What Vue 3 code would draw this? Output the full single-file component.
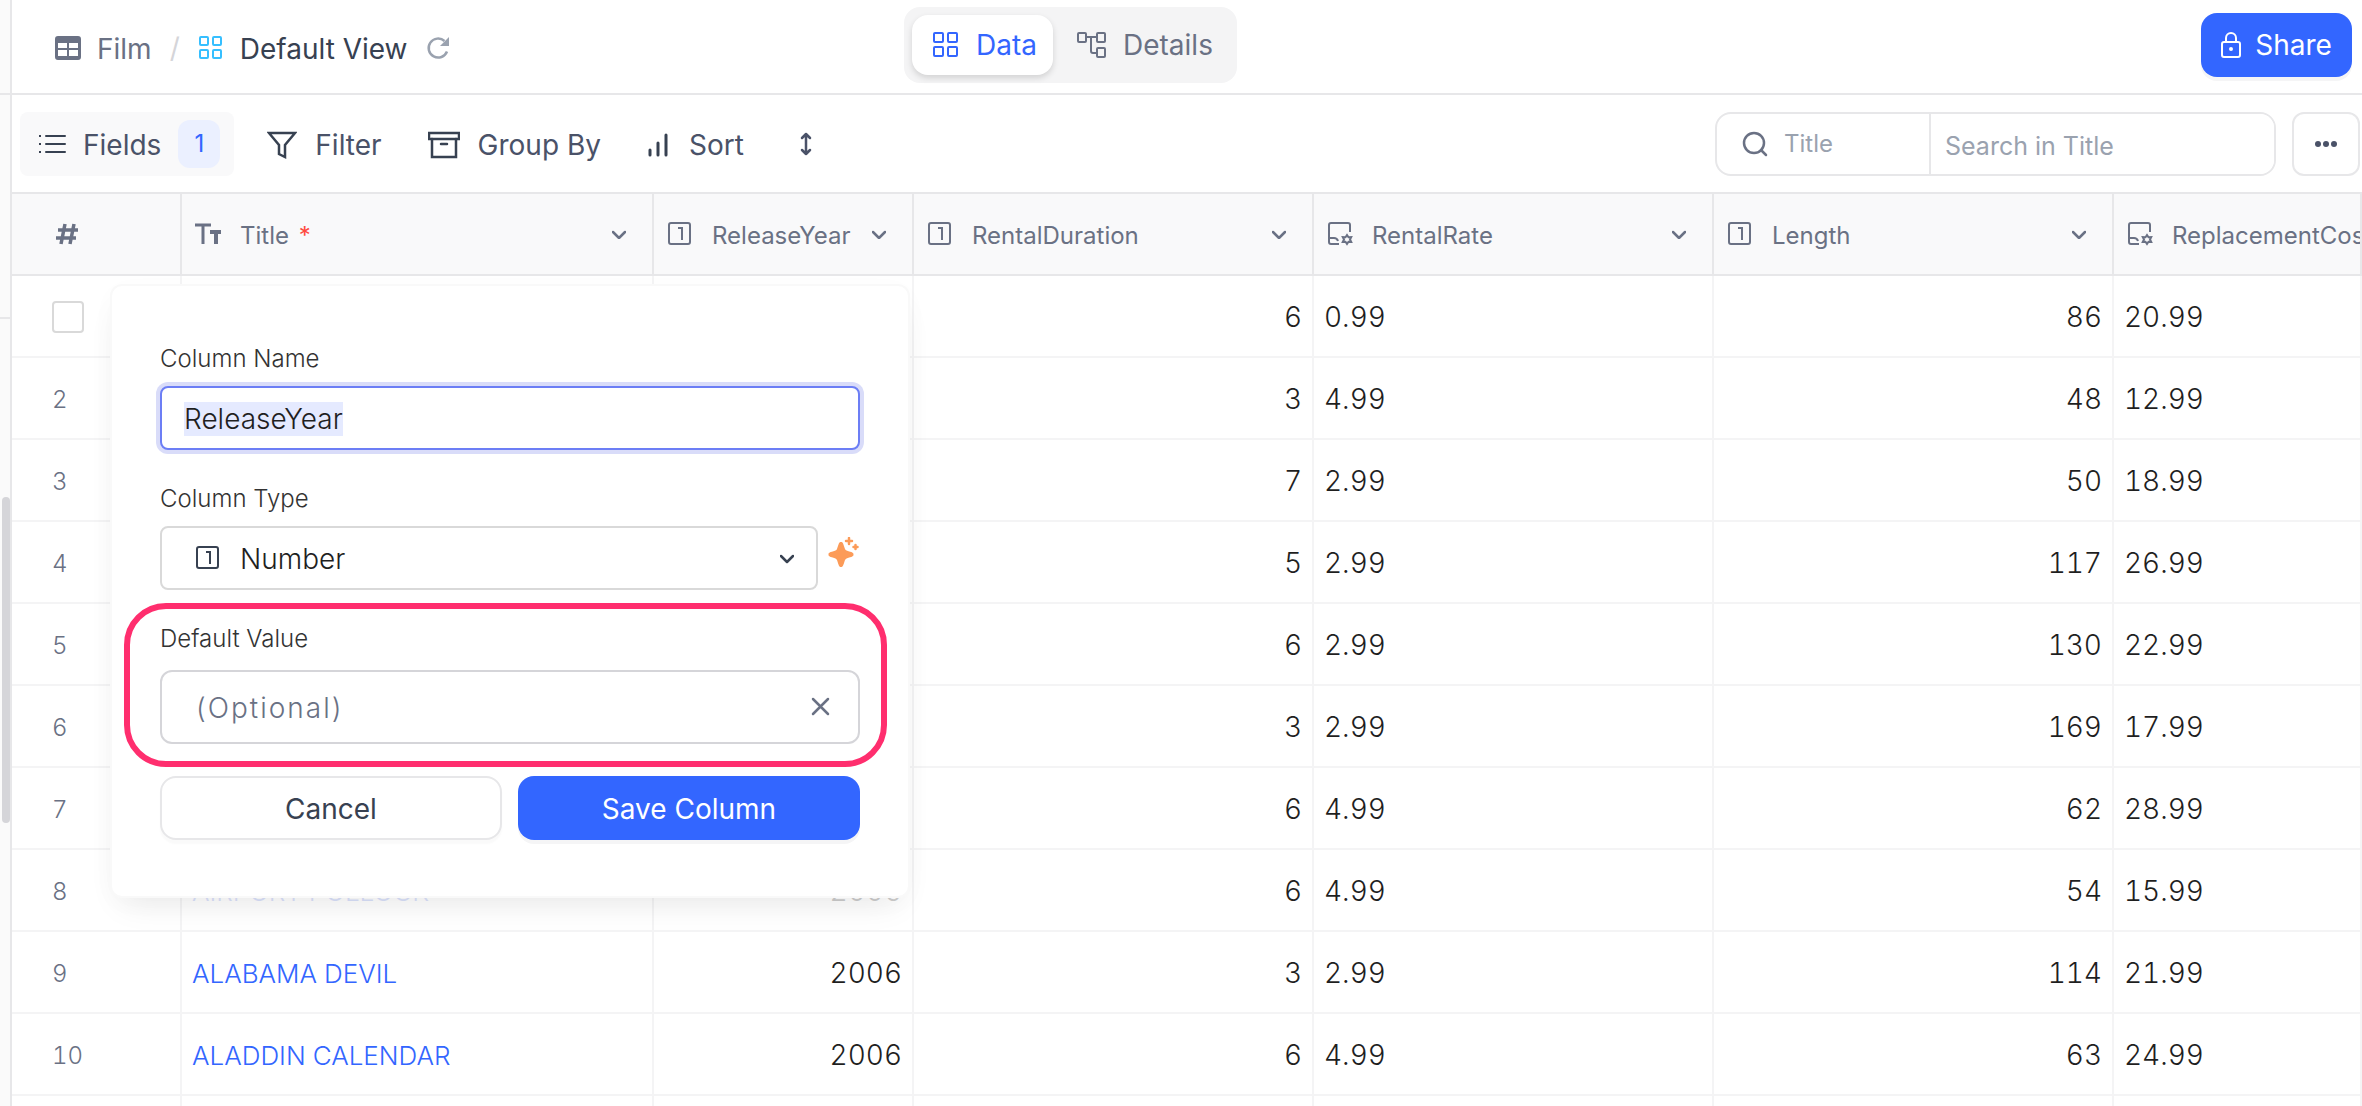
<script setup>
import { onMounted, ref } from 'vue'

const nameInput = ref(null)
const columnName = ref('ReleaseYear')

onMounted(() => {
  nameInput.value.focus()
  nameInput.value.select()
})

const columns = [
  { key: 'title', label: 'Title', icon: 'text', required: true },
  { key: 'year', label: 'ReleaseYear', icon: 'number' },
  { key: 'duration', label: 'RentalDuration', icon: 'number' },
  { key: 'rate', label: 'RentalRate', icon: 'decimal' },
  { key: 'length', label: 'Length', icon: 'number' },
  { key: 'cost', label: 'ReplacementCost', icon: 'decimal' },
]

const rows = [
  { id: 1, title: '', year: '', duration: 6, rate: '0.99', length: 86, cost: '20.99' },
  { id: 2, title: '', year: '', duration: 3, rate: '4.99', length: 48, cost: '12.99' },
  { id: 3, title: '', year: '', duration: 7, rate: '2.99', length: 50, cost: '18.99' },
  { id: 4, title: '', year: '', duration: 5, rate: '2.99', length: 117, cost: '26.99' },
  { id: 5, title: '', year: '', duration: 6, rate: '2.99', length: 130, cost: '22.99' },
  { id: 6, title: '', year: '', duration: 3, rate: '2.99', length: 169, cost: '17.99' },
  { id: 7, title: '', year: '', duration: 6, rate: '4.99', length: 62, cost: '28.99' },
  { id: 8, title: 'AIRPORT POLLOCK', year: 2006, duration: 6, rate: '4.99', length: 54, cost: '15.99', dimmed: true },
  { id: 9, title: 'ALABAMA DEVIL', year: 2006, duration: 3, rate: '2.99', length: 114, cost: '21.99' },
  { id: 10, title: 'ALADDIN CALENDAR', year: 2006, duration: 6, rate: '4.99', length: 63, cost: '24.99' },
]
</script>

<template>
  <div class="app">
    <aside class="rail">
      <div class="rail-head"></div>
      <div class="rail-mid"></div>
      <div class="rail-thumb"></div>
    </aside>

    <main class="main">
      <header class="topbar">
        <nav class="crumbs" aria-label="Breadcrumb">
          <svg class="film-icon" width="26" height="24" viewBox="0 0 26 24">
            <path fill="#6a7184" fill-rule="evenodd" d="M3 0h20a3 3 0 0 1 3 3v18a3 3 0 0 1-3 3H3a3 3 0 0 1-3-3V3a3 3 0 0 1 3-3zM3 7v5h9V7zM14 7v5h9V7zM3 14v6h9v-6zM14 14v6h9v-6z" />
          </svg>
          <a class="crumb" href="#">Film</a>
          <span class="slash">/</span>
          <svg class="view-icon" width="26" height="26" viewBox="0 0 26 26" fill="none" stroke="#36bfff" stroke-width="2">
            <rect x="2" y="2" width="8" height="8" rx="1" /><rect x="15" y="2" width="8" height="8" rx="1" />
            <rect x="2" y="15" width="8" height="8" rx="1" /><rect x="15" y="15" width="8" height="8" rx="1" />
          </svg>
          <a class="crumb current" href="#">Default View</a>
          <button class="plain reload" type="button" aria-label="Reload">
            <svg width="24" height="24" viewBox="0 0 24 24">
              <path fill="none" stroke="#9aa2af" stroke-width="2.500" d="M21 15.500A9.500 9.500 0 1 1 18.500 5" />
              <path fill="#9aa2af" d="M23 1v9h-9z" />
            </svg>
          </button>
        </nav>

        <div class="tabs">
          <button class="tab active" type="button">
            <svg width="28" height="26" viewBox="0 0 28 26" fill="none" stroke="currentColor" stroke-width="2">
              <rect x="2" y="1" width="9" height="9" rx="1" /><rect x="16" y="1" width="9" height="9" rx="1" />
              <rect x="2" y="15" width="9" height="9" rx="1" /><rect x="16" y="15" width="9" height="9" rx="1" />
            </svg>
            Data
          </button>
          <button class="tab" type="button">
            <svg width="30" height="28" viewBox="0 0 30 28" fill="none" stroke="currentColor" stroke-width="2">
              <rect x="1" y="2" width="8" height="9" rx="1" /><rect x="20" y="2" width="8" height="9" rx="1" />
              <rect x="20" y="17" width="8" height="9" rx="1" /><path d="M9 6h11M14 6v14a2 2 0 0 0 2 2h4" />
            </svg>
            Details
          </button>
        </div>

        <div class="top-actions">
          <button class="share" type="button">
            <svg width="20" height="26" viewBox="0 0 20 26" fill="none" stroke="currentColor" stroke-width="2">
              <rect x="1" y="10" width="18" height="15" rx="2" /><path d="M5 10V6a5 5 0 0 1 10 0v4" />
              <circle cx="10" cy="17" r="2" fill="currentColor" stroke="none" />
            </svg>
            Share
          </button>
        </div>
      </header>

      <div class="toolbar">
        <button class="tool fields" type="button">
          <svg width="28" height="20" viewBox="0 0 28 20" fill="none" stroke="#374151" stroke-width="2">
            <path d="M8 2h19M8 10h19M8 18h19" stroke-linecap="round" /><path d="M1 2h2M1 10h2M1 18h2" />
          </svg>
          <span class="fields-label">Fields</span>
          <span class="count">1</span>
        </button>
        <button class="tool filter" type="button">
          <svg width="30" height="28" viewBox="0 0 30 28" fill="none" stroke="#374151" stroke-width="2.500">
            <path d="M2 2h26L18 14v12l-6-3v-9z" />
          </svg>
          Filter
        </button>
        <button class="tool group" type="button">
          <svg width="32" height="28" viewBox="0 0 32 28" fill="none" stroke="#374151" stroke-width="2.500">
            <rect x="1" y="2" width="30" height="6" /><path d="M4 8v18h24V8M13 13h6" stroke-linecap="round" />
          </svg>
          Group By
        </button>
        <button class="tool sort" type="button">
          <svg width="22" height="26" viewBox="0 0 22 26" fill="none" stroke="#374151" stroke-width="3" stroke-linecap="round">
            <path d="M3 18v5M11 11v12M19 3v20" />
          </svg>
          Sort
        </button>
        <button class="plain row-height" type="button" aria-label="Row height">
          <svg width="12" height="24" viewBox="0 0 12 24" fill="none" stroke="#4a5268" stroke-width="2.500" stroke-linecap="round" stroke-linejoin="round">
            <path d="M6 2v20M2 6l4-4 4 4M2 18l4 4 4-4" />
          </svg>
        </button>

        <div class="search">
          <button class="plain search-field" type="button">
            <svg width="26" height="26" viewBox="0 0 26 26" fill="none" stroke="#6a7184" stroke-width="2.500" stroke-linecap="round">
              <circle cx="12" cy="12" r="10" /><path d="M19 19l5 5" />
            </svg>
            Title
          </button>
          <input class="search-input" type="text" placeholder="Search in Title" aria-label="Search in Title" />
        </div>
        <button class="more" type="button" aria-label="More actions">
          <svg width="24" height="8" viewBox="0 0 24 8" fill="#4a5268">
            <circle cx="4" cy="4" r="3" /><circle cx="12" cy="4" r="3" /><circle cx="20" cy="4" r="3" />
          </svg>
        </button>
      </div>

      <section class="grid">
        <table>
          <colgroup>
            <col class="w-index" /><col class="w-title" /><col class="w-year" />
            <col class="w-std" /><col class="w-std" /><col class="w-std" /><col />
          </colgroup>
          <thead>
            <tr>
              <th class="index">
                <svg width="24" height="22" viewBox="0 0 24 22" fill="none" stroke="#6a7184" stroke-width="3.500">
                  <path d="M10 1L6 21M19 1l-4 20M3 7h20M1 15h20" />
                </svg>
              </th>
              <th v-for="col in columns" :key="col.key">
                <div class="th">
                  <span class="th-icon">
                    <svg v-if="col.icon === 'text'" width="28" height="26" viewBox="0 0 28 26" fill="none" stroke="#6a7184">
                      <path d="M0 4h16M8 4v19" stroke-width="3" /><path d="M15 11h11M21 11v12" stroke-width="4" />
                    </svg>
                    <svg v-else-if="col.icon === 'number'" width="26" height="26" viewBox="0 0 26 26" fill="none" stroke="#6a7184" stroke-width="2">
                      <rect x="2" y="2" width="21" height="21" rx="2" /><path d="M11 7h4v12" />
                    </svg>
                    <svg v-else width="28" height="28" viewBox="0 0 28 28" fill="none" stroke="#6a7184" stroke-width="2">
                      <path d="M23 12V5a2 2 0 0 0-2-2H4a2 2 0 0 0-2 2v17a2 2 0 0 0 2 2h8M2 18h5q3 0 4 3" />
                      <path d="M20 15l1.500 2.200 2.700-.2-1.200 2.500 1.200 2.500-2.700-.2L20 24l-1.500-2.200-2.700.2 1.200-2.500-1.200-2.500 2.700.2z" />
                    </svg>
                  </span>
                  <span class="th-label">{{ col.label }}<span v-if="col.required" class="star">*</span></span>
                  <svg v-if="col.key !== 'cost'" class="chev" width="14" height="10" viewBox="0 0 14 10" fill="none" stroke="#6a7184" stroke-width="2.500" stroke-linecap="round" stroke-linejoin="round">
                    <path d="M1 3l6 6 6-6" />
                  </svg>
                </div>
              </th>
            </tr>
          </thead>
          <tbody>
            <tr v-for="row in rows" :key="row.id" :class="{ dimmed: row.dimmed }">
              <td class="index">
                <input v-if="row.id === 1" class="check" type="checkbox" aria-label="Select row 1" />
                <template v-else>{{ row.id }}</template>
              </td>
              <td class="title">{{ row.title }}</td>
              <td class="num year">{{ row.year }}</td>
              <td class="num">{{ row.duration }}</td>
              <td>{{ row.rate }}</td>
              <td class="num">{{ row.length }}</td>
              <td>{{ row.cost }}</td>
            </tr>
            <tr><td class="index"></td><td></td><td></td><td></td><td></td><td></td><td></td></tr>
          </tbody>
        </table>

        <form class="popover" @submit.prevent>
          <div class="field">
            <label for="col-name">Column Name</label>
            <input id="col-name" ref="nameInput" v-model="columnName" class="name-input" type="text" />
          </div>
          <div class="field">
            <label for="col-type">Column Type</label>
            <div class="type-row">
              <div class="select-wrap">
                <svg class="type-icon" width="26" height="26" viewBox="0 0 26 26" fill="none" stroke="#374151" stroke-width="2">
                  <rect x="2" y="2" width="21" height="21" rx="2" /><path d="M11 7h4v12" />
                </svg>
                <select id="col-type"><option>Number</option></select>
                <svg class="type-chev" width="14" height="10" viewBox="0 0 14 10" fill="none" stroke="#374151" stroke-width="2.500" stroke-linecap="round" stroke-linejoin="round">
                  <path d="M1 2l6 6 6-6" />
                </svg>
              </div>
              <svg class="sparkle" width="32" height="32" viewBox="0 0 32 32" fill="#fc9b58">
                <path d="M13 5c2 0 2 1 4 7q.5 1 1.500 1.500c6 2 7 2 7 4s-1 2-7 4q-1 .5-1.500 1.500c-2 6-2 7-4 7s-2-1-4-7q-.5-1-1.500-1.500c-6-2-7-2-7-4s1-2 7-4Q8.500 13 9 12c2-6 2-7 4-7z" />
                <path d="M21 1v6M18 4h6M27.500 8v4M25.500 10h4" fill="none" stroke="#fc9b58" stroke-width="2.500" stroke-linecap="round" />
              </svg>
            </div>
          </div>
          <div class="field default-field">
            <label for="col-default">Default Value</label>
            <div class="default-box">
              <input id="col-default" type="text" placeholder="(Optional)" />
              <button class="plain" type="button" aria-label="Clear">
                <svg width="20" height="20" viewBox="0 0 20 20" fill="none" stroke="#6a7184" stroke-width="2.500" stroke-linecap="round">
                  <path d="M3 2l15 15M18 2L3 17" />
                </svg>
              </button>
            </div>
            <div class="ring"></div>
          </div>
          <div class="actions">
            <button class="cancel" type="button">Cancel</button>
            <button class="save" type="submit">Save Column</button>
          </div>
        </form>
      </section>
    </main>
  </div>
</template>

<style>
body {
  margin: 0;
  overflow: hidden;
}
</style>

<style scoped>
* {
  box-sizing: border-box;
}

.app {
  display: flex;
  height: 100vh;
  overflow: hidden;
  background: #fff;
  color: #1f1f1f;
  font-family: Inter, "Liberation Sans", sans-serif;
  font-size: 28px;
}

button,
input,
select {
  font: inherit;
  color: inherit;
}

svg {
  display: block;
  flex: none;
}

.plain {
  border: 0;
  padding: 0;
  background: none;
}

.rail {
  flex: none;
  display: flex;
  flex-direction: column;
  width: 12px;
  border-right: 2px solid #e7e7e9;
  background: #fafafa;
}

.rail-head {
  height: 95px;
  border-bottom: 2px solid #e7e7e9;
}

.rail-mid {
  height: 224px;
  border-bottom: 2px solid #e7e7e9;
}

.rail-thumb {
  height: 326px;
  margin: 178px 0 0 2px;
  border-radius: 4px;
  background: #d5d5d9;
}

.main {
  flex: 1;
  min-width: 0;
}

.topbar {
  display: grid;
  grid-template-columns: 4fr auto 5fr;
  height: 95px;
  padding: 0 10px 3px 0;
  align-items: center;
  border-bottom: 2px solid #e7e7e9;
}

.crumbs {
  display: flex;
  align-items: center;
  padding: 5px 0 0 43px;
}

.crumb {
  padding-top: 2px;
  color: #6a7184;
  text-decoration: none;
}

.film-icon {
  margin-right: 16px;
}

.slash {
  margin: 0 18px;
  color: #d5d5d9;
}

.view-icon {
  margin-right: 16px;
}

.crumb.current {
  color: #374151;
}

.reload {
  margin-left: 18px;
}

.tabs {
  display: flex;
  padding: 8px;
  border-radius: 16px;
  background: #f4f4f5;
}

.tab {
  display: flex;
  align-items: center;
  gap: 16px;
  height: 60px;
  padding: 0 16px 0 24px;
  border: 0;
  border-radius: 16px;
  background: none;
  color: #6a7184;
}

.tab.active {
  padding-left: 20px;
  background: #fff;
  color: #36f;
  box-shadow: 0 3px 6px rgba(0, 0, 0, 0.14);
}

.top-actions {
  display: flex;
  justify-content: flex-end;
}

.share {
  display: flex;
  align-items: center;
  justify-content: center;
  gap: 14px;
  width: 151px;
  height: 64px;
  padding: 0;
  border: 0;
  border-radius: 16px;
  background: #36f;
  color: #fff;
  box-shadow: 0 4px 0 #f5f5f6;
}

.toolbar {
  display: flex;
  align-items: center;
  height: 99px;
  padding: 0 2px 0 8px;
  border-bottom: 2px solid #e7e7e9;
}

.tool {
  display: flex;
  align-items: center;
  gap: 18px;
  height: 64px;
  padding: 2px 0 0;
  border: 0;
  background: none;
  color: #4a5268;
  white-space: nowrap;
}

.fields {
  gap: 17px;
  padding: 0 14px 0 18px;
  border-radius: 8px;
  background: #f9f9fa;
}

.fields-label {
  padding-top: 2px;
}

.count {
  display: flex;
  align-items: center;
  justify-content: center;
  width: 42px;
  height: 48px;
  border-radius: 12px;
  background: #ebf0ff;
  color: #36f;
  font-size: 24px;
}

.filter {
  margin-left: 33px;
}

.group {
  margin-left: 46px;
}

.sort {
  gap: 20px;
  margin-left: 46px;
}

.row-height {
  margin-left: 56px;
}

.search {
  display: flex;
  width: 561px;
  height: 64px;
  margin-left: auto;
  border: 2px solid #e7e7e9;
  border-radius: 16px;
  overflow: hidden;
}

.search-field {
  flex: none;
  display: flex;
  align-items: center;
  gap: 16px;
  width: 214px;
  padding-left: 25px;
  border-right: 2px solid #e7e7e9;
  color: #9aa2af;
  font-size: 24px;
}

.search-input {
  flex: 1;
  min-width: 0;
  padding: 4px 14px 0;
  border: 0;
  outline: 0;
  font-size: 25px;
}

.search-input::placeholder {
  color: #9aa2af;
}

.more {
  display: flex;
  align-items: center;
  justify-content: center;
  width: 68px;
  height: 64px;
  margin-left: 16px;
  padding: 0;
  border: 2px solid #e7e7e9;
  border-radius: 12px;
  background: #fff;
}

.grid {
  position: relative;
}

table {
  width: 100%;
  table-layout: fixed;
  border-collapse: separate;
  border-spacing: 0;
  font-variant-numeric: tabular-nums;
}

.w-index {
  width: 170px;
}

.w-title {
  width: 472px;
}

.w-year {
  width: 260px;
}

.w-std {
  width: 400px;
}

th,
td {
  height: 82px;
  padding: 2px 10px 0;
  border-right: 2px solid #f4f4f5;
  border-bottom: 2px solid #f4f4f5;
  font-weight: 300;
  text-align: left;
  overflow: hidden;
  white-space: nowrap;
}

th {
  padding: 0;
  border-color: #e7e7e9;
  background: #f9f9fa;
  color: #6a7184;
  font-size: 24px;
  font-weight: 400;
}

th.index {
  padding-left: 43px;
}

.th {
  display: flex;
  align-items: center;
  padding: 0 26px 0 13px;
}

.th-icon {
  flex: none;
  width: 45px;
}

.th-label {
  flex: 1;
  min-width: 0;
  padding-top: 2px;
  overflow: hidden;
}

th:last-child .th {
  padding-right: 0;
}

.star {
  margin-left: 8px;
  color: #ff4a3f;
}

td.index {
  padding-left: 40px;
  color: #6a7184;
  font-size: 24px;
}

td.num {
  text-align: right;
}

td.title {
  color: #36f;
  font-size: 26px;
}

.dimmed td.title {
  color: #dbe2fb;
}

.dimmed td.year {
  color: #cdcdcd;
}

.check {
  display: block;
  width: 32px;
  height: 32px;
  margin: 0;
  appearance: none;
  border: 2px solid #d9d9d9;
  border-radius: 4px;
  background: #fff;
}

.popover {
  position: absolute;
  top: 90px;
  left: 98px;
  display: flex;
  flex-direction: column;
  gap: 30px;
  width: 800px;
  padding: 54px 48px 56px;
  border: 2px solid #f9f9f9;
  border-radius: 12px;
  background: #fff;
  box-shadow: 0 16px 32px -12px rgba(0, 0, 0, 0.09), 0 6px 28px rgba(0, 0, 0, 0.02);
}

.field {
  display: flex;
  flex-direction: column;
  gap: 8px;
}

.field label {
  color: #333;
  font-size: 24px;
  font-weight: 300;
  line-height: 38px;
}

.name-input {
  width: 100%;
  height: 64px;
  padding: 2px 22px 0;
  border: 2px solid #6c7ef5;
  border-radius: 8px;
  outline: 0;
  background: #fff;
  box-shadow: 0 0 0 4px #d9dcf9;
  font-weight: 300;
}

.name-input::selection {
  background: #e5eaff;
  color: #1f1f1f;
}

.type-row {
  display: flex;
  gap: 10px;
}

.select-wrap {
  position: relative;
  flex: 1;
}

.select-wrap select {
  display: block;
  width: 100%;
  height: 64px;
  padding: 2px 78px 0;
  appearance: none;
  border: 2px solid #d9d9d9;
  border-radius: 8px;
  background: #fff;
  font-weight: 300;
}

.type-icon {
  position: absolute;
  top: 19px;
  left: 35px;
}

.type-chev {
  position: absolute;
  top: 28px;
  right: 24px;
}

.sparkle {
  margin-top: 11px;
}

.default-field {
  position: relative;
  gap: 12px;
}

.default-box {
  display: flex;
  align-items: center;
  height: 74px;
  padding: 0 28px 0 34px;
  border: 2px solid #d5d5d9;
  border-radius: 12px;
}

.default-box input {
  flex: 1;
  min-width: 0;
  padding: 2px 0 0;
  border: 0;
  outline: 0;
  background: none;
  font-weight: 300;
  letter-spacing: 2px;
}

.default-box input::placeholder {
  color: #6a7184;
}

.ring {
  position: absolute;
  inset: -17px -27px -23px -36px;
  border: 6px solid #ff2e6e;
  border-radius: 42px;
  pointer-events: none;
}

.actions {
  display: grid;
  grid-template-columns: 1fr 1fr;
  gap: 16px;
  margin-top: 2px;
}

.actions button {
  height: 64px;
  padding: 2px 0 0;
  border-radius: 16px;
}

.cancel {
  border: 2px solid #e7e7e9;
  background: #fff;
  color: #374151;
  box-shadow: 0 4px 2px #fafafa;
}

.save {
  border: 0;
  background: #36f;
  color: #fff;
  box-shadow: 0 4px 0 #f5f5f6;
}
</style>
